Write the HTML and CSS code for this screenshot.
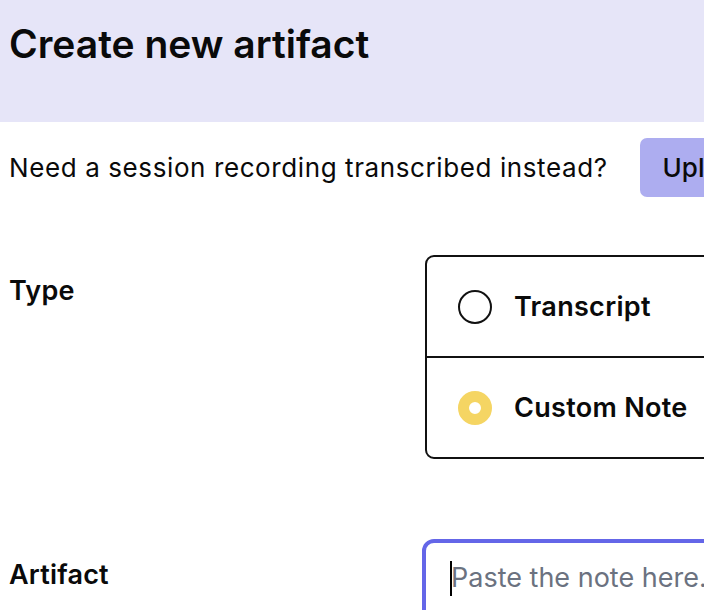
FILE: index.html
```html
<!DOCTYPE html>
<html lang="en">
<head>
<meta charset="utf-8">
<title>Create new artifact</title>
<link rel="stylesheet" href="styles.css">
</head>
<body>
<header class="header">
  <h1 class="title">Create new artifact</h1>
</header>
<main class="content">
  <div class="upload-row">
    <p class="upload-text">Need a session recording transcribed instead?</p>
    <button class="upload-btn" type="button">Upload recording</button>
  </div>
  <div class="field field-type">
    <div class="field-label">Type</div>
    <div class="radio-group">
      <label class="radio-option">
        <span class="radio"></span>
        <span class="radio-text">Transcript</span>
      </label>
      <label class="radio-option">
        <span class="radio radio-checked"></span>
        <span class="radio-text">Custom Note</span>
      </label>
    </div>
  </div>
  <div class="field field-artifact">
    <div class="field-label">Artifact</div>
    <div class="textarea">
      <span class="caret"></span><span class="placeholder">Paste the note here.</span>
    </div>
  </div>
</main>
</body>
</html>
```
FILE: styles.css
```css
html, body {
  margin: 0;
  padding: 0;
  width: 704px;
  height: 610px;
  overflow: hidden;
  background: #ffffff;
}
body {
  font-family: "Inter", "Noto Sans", sans-serif;
  color: #0a0a0a;
}
.header {
  background: #e6e5f8;
  height: 122px;
  padding: 0 9px;
  box-sizing: border-box;
}
.title {
  margin: 0;
  padding-top: 20px;
  font-size: 39px;
  line-height: 48px;
  font-weight: 600;
  letter-spacing: 0;
}
.content {
  padding: 16px 0 0 9px;
  width: 1100px;
}
.upload-row {
  display: flex;
  align-items: center;
  gap: 32px;
}
.upload-text {
  margin: 0;
  font-size: 26px;
  font-weight: 400;
  letter-spacing: 0.6px;
}
.upload-btn {
  font-family: inherit;
  background: #adadf0;
  border: none;
  border-radius: 7px;
  height: 59px;
  padding: 0 23px;
  font-size: 26px;
  font-weight: 500;
  color: #0a0a0a;
  white-space: nowrap;
}
.field {
  display: grid;
  grid-template-columns: 413px 560px;
}
.field-type {
  margin-top: 58px;
}
.field-label {
  font-size: 27px;
  font-weight: 600;
  line-height: 30px;
  letter-spacing: 0.2px;
}
.field-type .field-label {
  padding-top: 21px;
}
.radio-group {
  margin-left: 3px;
  border: 2px solid #111111;
  border-radius: 9px;
  display: flex;
  flex-direction: column;
}
.radio-option {
  display: flex;
  align-items: center;
  height: 99px;
  padding-left: 31px;
  gap: 22px;
}
.radio-option + .radio-option {
  border-top: 2px solid #111111;
}
.radio {
  width: 34px;
  height: 34px;
  border-radius: 50%;
  border: 2px solid #111111;
  box-sizing: border-box;
  flex: none;
}
.radio-checked {
  border: 11px solid #f5d563;
  background: #ffffff;
}
.radio-text {
  font-size: 27px;
  font-weight: 600;
  letter-spacing: 0.3px;
}
.field-artifact {
  margin-top: 80px;
}
.field-artifact .field-label {
  padding-top: 21px;
}
.textarea {
  border: 4px solid #6466e8;
  border-radius: 12px;
  height: 160px;
  padding: 16px 24px;
  display: flex;
  align-items: flex-start;
}
.caret {
  width: 2px;
  height: 35px;
  background: #000;
  margin-top: 2px;
}
.placeholder {
  font-size: 27px;
  line-height: 38px;
  color: #6b7280;
  white-space: nowrap;
  margin-left: -1px;
}
```
